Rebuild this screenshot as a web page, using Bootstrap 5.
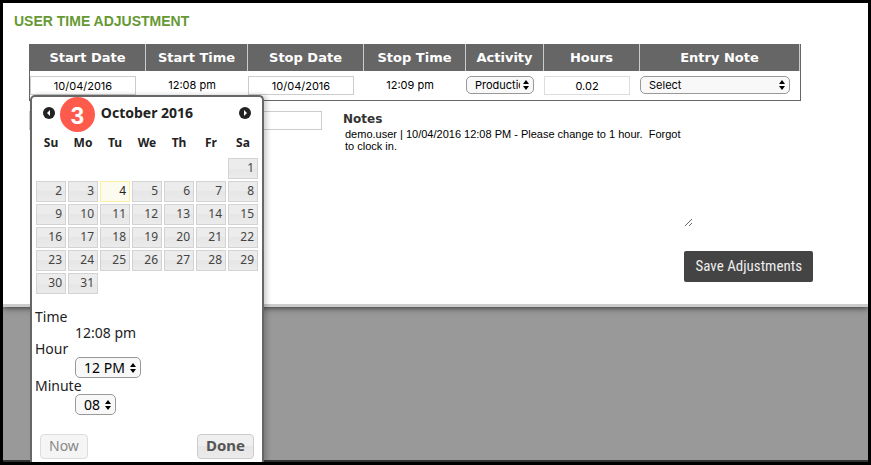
<!DOCTYPE html>
<html lang="en">
<head>
<meta charset="utf-8">
<meta name="viewport" content="width=device-width, initial-scale=1">
<title>User Time Adjustment</title>
<link href="https://cdn.jsdelivr.net/npm/bootstrap@5.3.0/dist/css/bootstrap.min.css" rel="stylesheet">
<style>
body { background: #000; font-family: "Liberation Sans", Arial, sans-serif; color: #000; }
.frame { min-height: 100vh; border: 3px solid #000; background: #999; overflow: hidden; box-shadow: inset 0 -2px #333; }
.panel { background: #fff; border-bottom: 3px solid #ccc; box-shadow: 0 1px 6px #333; padding: 10px 55px 22px 11px; }
.page-title { font-size: 14px; line-height: 16px; font-weight: 700; color: #693; margin-bottom: 15px; }
.entry-area { padding: 0 12px 0 15px; }
.entry-table { border: 1px solid #666; border-top: 0; border-collapse: separate; border-spacing: 0; table-layout: fixed; }
.entry-table th { background: #666; color: #fff; font: 700 13px/27px "DejaVu Sans", Verdana, sans-serif; text-align: center; border-right: 1px solid #ccc; padding: 0; white-space: nowrap; }
.entry-table td { padding: 5px 10px 5px 0; height: 29px; text-align: center; vertical-align: top; font: 11px/19px Inter, sans-serif; }
.c-start { width: 116px; } .c-time { width: 102px; } .c-stop { width: 116px; } .c-act { width: 78px; } .c-hours { width: 96px; }
.field { display: block; width: 100%; height: 19px; border: 1px solid #ccc; background: #fff; color: #000; text-align: center; font: 11px/17px Inter, sans-serif; padding: 0; }
.field-soft { border-color: #ddd; }
.pick { display: block; appearance: none; border: 1px solid #999; border-radius: 5px; color: #000; height: 18px; width: 100%; font: 11px/16px Inter, sans-serif; padding: 0 13px 0 8px;
  background: #f8f8f8 url("data:image/svg+xml,%3Csvg xmlns='http://www.w3.org/2000/svg' width='6' height='10'%3E%3Cpath d='M3 0L6 4H0zM3 10L6 6H0z'/%3E%3C/svg%3E") no-repeat right 4px center; }
.below { padding-top: 10px; }
.side { flex: 0 0 293px; }
.notes { flex: 0 1 350px; margin-left: 21px; }
.notes label { display: block; font: 700 12px/16px "DejaVu Sans", Verdana, sans-serif; color: #333; }
.notes textarea { display: block; width: 100%; height: 100px; border: 0; padding: 1px 2px; font: 11px/12px "Liberation Sans", Arial, sans-serif; color: #000; resize: both; }
.save { background: #444; color: #eee; border: 0; border-radius: 2px; font: 15px/17px "Roboto Condensed", Roboto, sans-serif; padding: 7px 11px; margin-top: 24px; }
.picker { position: absolute; top: 100%; left: 0; z-index: 5; width: 234px; background: #fff; border: 2px solid #666; border-bottom: 0; border-radius: 5px 5px 0 0; box-shadow: 3px 0 5px #0003; padding: 3px 3px; color: #222; text-align: left; font: 13px/16px "Noto Sans", sans-serif; }
.picker-head { height: 26px; padding: 0 8px; margin-bottom: 2px; }
.picker-head button { display: flex; border: 0; padding: 0; background: none; }
.month { font: 700 14px/16px "Noto Sans", sans-serif; }
.step { position: absolute; left: 28px; top: 0; width: 35px; height: 35px; border-radius: 50%; background: #ff5b4d; color: #fff; font: 700 24px/37px "Liberation Sans", Arial, sans-serif; text-align: center; }
.picker .days { width: 100%; table-layout: fixed; border-collapse: separate; border-spacing: 0; }
.picker .days th { background: none; color: #222; border: 0; height: 29px; font: 700 12px/29px "Noto Sans", sans-serif; }
.picker .days td { padding: 1px; height: 23px; }
.day { display: block; width: 100%; height: 21px; border: 1px solid #d3d3d3; background: linear-gradient(#ececec 50%, #e6e6e6 50%, #ebebeb); color: #444; text-align: right; font: 12px/17px "Noto Sans", sans-serif; padding: 0 3px 2px; }
.today { border-color: #fcefa1; background: #fdfaef; color: #222; }
.times { margin: 14px 0 19px; font-size: 14px; }
.times dt, .times label { font-weight: 400; display: block; line-height: 16px; }
.times dd { margin: 0 0 0 40px; line-height: 16px; }
.times .pick { height: 21px; width: 66px; font: 14px/18px "Noto Sans", sans-serif; }
.times .minute { width: 41px; }
.picker-foot { padding: 0 5px; }
.act-btn { height: 25px; border: 1px solid #ccc; border-radius: 4px; background: linear-gradient(#efefef 50%, #e6e6e6 50%, #ebebeb); color: #555; font: 700 15px/21px "Noto Sans", sans-serif; padding: 0 8px 2px; }
.act-btn.now { font-size: 14px; font-weight: 400; background: #f5f5f5; border-color: #ddd; color: #888; }
</style>
<script src="https://cdn.jsdelivr.net/npm/bootstrap@5.3.0/dist/js/bootstrap.bundle.min.js"></script>
</head>
<body>
<div class="frame">
<main class="panel">
<h1 class="page-title">USER TIME ADJUSTMENT</h1>
<div class="entry-area">
<table class="entry-table w-100">
<colgroup><col class="c-start"><col class="c-time"><col class="c-stop"><col class="c-time"><col class="c-act"><col class="c-hours"><col></colgroup>
<thead><tr><th>Start Date</th><th>Start Time</th><th>Stop Date</th><th>Stop Time</th><th>Activity</th><th>Hours</th><th>Entry Note</th></tr></thead>
<tbody><tr>
<td><div class="position-relative">
<input class="field" type="text" value="10/04/2016" aria-label="Start Date">
<div class="picker">
<div class="picker-head d-flex align-items-center justify-content-between">
<button type="button" aria-label="Previous month"><svg width="12" height="12" viewBox="0 0 12 12"><circle cx="6" cy="6" r="6" fill="#222"/><path d="M7 3v6L4 6z" fill="#fff"/></svg></button>
<span class="month">October 2016</span>
<button type="button" aria-label="Next month"><svg width="12" height="12" viewBox="0 0 12 12"><circle cx="6" cy="6" r="6" fill="#222"/><path d="M5 3v6l3-3z" fill="#fff"/></svg></button>
</div>
<span class="step">3</span>
<table class="days">
<thead><tr><th>Su</th><th>Mo</th><th>Tu</th><th>We</th><th>Th</th><th>Fr</th><th>Sa</th></tr></thead>
<tbody>
<tr><td></td><td></td><td></td><td></td><td></td><td></td><td><button class="day" type="button">1</button></td></tr>
<tr><td><button class="day" type="button">2</button></td><td><button class="day" type="button">3</button></td><td><button class="day today" type="button">4</button></td><td><button class="day" type="button">5</button></td><td><button class="day" type="button">6</button></td><td><button class="day" type="button">7</button></td><td><button class="day" type="button">8</button></td></tr>
<tr><td><button class="day" type="button">9</button></td><td><button class="day" type="button">10</button></td><td><button class="day" type="button">11</button></td><td><button class="day" type="button">12</button></td><td><button class="day" type="button">13</button></td><td><button class="day" type="button">14</button></td><td><button class="day" type="button">15</button></td></tr>
<tr><td><button class="day" type="button">16</button></td><td><button class="day" type="button">17</button></td><td><button class="day" type="button">18</button></td><td><button class="day" type="button">19</button></td><td><button class="day" type="button">20</button></td><td><button class="day" type="button">21</button></td><td><button class="day" type="button">22</button></td></tr>
<tr><td><button class="day" type="button">23</button></td><td><button class="day" type="button">24</button></td><td><button class="day" type="button">25</button></td><td><button class="day" type="button">26</button></td><td><button class="day" type="button">27</button></td><td><button class="day" type="button">28</button></td><td><button class="day" type="button">29</button></td></tr>
<tr><td><button class="day" type="button">30</button></td><td><button class="day" type="button">31</button></td><td></td><td></td><td></td><td></td><td></td></tr>
</tbody>
</table>
<dl class="times">
<dt>Time</dt><dd>12:08 pm</dd>
<dt><label for="hour">Hour</label></dt><dd><select class="pick" id="hour"><option>12 PM</option></select></dd>
<dt><label for="minute">Minute</label></dt><dd><select class="pick minute" id="minute"><option>08</option></select></dd>
</dl>
<div class="picker-foot d-flex justify-content-between">
<button class="act-btn now" type="button">Now</button>
<button class="act-btn" type="button">Done</button>
</div>
</div>
</div></td>
<td>12:08 pm</td>
<td><input class="field" type="text" value="10/04/2016" aria-label="Stop Date"></td>
<td>12:09 pm</td>
<td><select class="pick" aria-label="Activity"><option>Production</option></select></td>
<td><input class="field field-soft" type="text" value="0.02" aria-label="Hours"></td>
<td><select class="pick" aria-label="Entry Note"><option>Select</option></select></td>
</tr></tbody>
</table>
<div class="below d-flex">
<div class="side"><input class="field" type="text" aria-label="Adjustment"></div>
<div class="notes">
<label for="notes">Notes</label>
<textarea id="notes">demo.user | 10/04/2016 12:08 PM - Please change to 1 hour.  Forgot to clock in.</textarea>
</div>
</div>
</div>
<div class="text-end"><button class="save" type="button">Save Adjustments</button></div>
</main>
</div>
</body>
</html>
